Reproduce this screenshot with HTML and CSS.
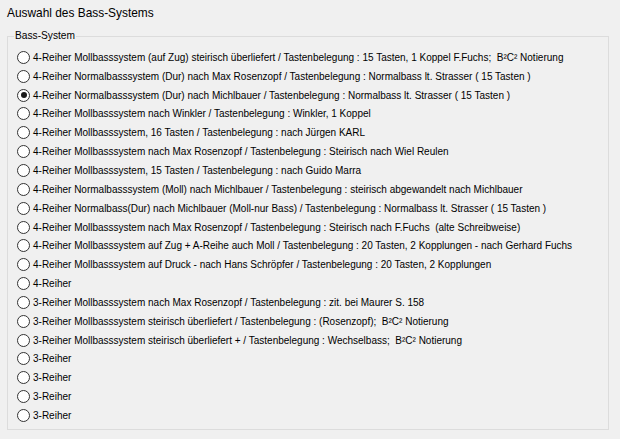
FILE: index.html
```html
<!DOCTYPE html>
<html>
<head>
<meta charset="utf-8">
<link rel="stylesheet" href="styles.css">
</head>
<body>
<div class="title">Auswahl des Bass-Systems</div>
<fieldset class="group">
<legend class="legend">Bass-System</legend>
<div class="list">
<div class="opt"><span class="radio"></span><span class="lbl">4-Reiher Mollbasssystem (auf Zug) steirisch überliefert / Tastenbelegung : 15 Tasten, 1 Koppel F.Fuchs;&nbsp; B²C² Notierung</span></div>
<div class="opt"><span class="radio"></span><span class="lbl">4-Reiher Normalbasssystem (Dur) nach Max Rosenzopf / Tastenbelegung : Normalbass lt. Strasser ( 15 Tasten )</span></div>
<div class="opt"><span class="radio checked"></span><span class="lbl">4-Reiher Normalbasssystem (Dur) nach Michlbauer / Tastenbelegung : Normalbass lt. Strasser ( 15 Tasten )</span></div>
<div class="opt"><span class="radio"></span><span class="lbl">4-Reiher Mollbasssystem nach Winkler / Tastenbelegung : Winkler, 1 Koppel</span></div>
<div class="opt"><span class="radio"></span><span class="lbl">4-Reiher Mollbasssystem, 16 Tasten / Tastenbelegung : nach Jürgen KARL</span></div>
<div class="opt"><span class="radio"></span><span class="lbl">4-Reiher Mollbasssystem nach Max Rosenzopf / Tastenbelegung : Steirisch nach Wiel Reulen</span></div>
<div class="opt"><span class="radio"></span><span class="lbl">4-Reiher Mollbasssystem, 15 Tasten / Tastenbelegung : nach Guido Marra</span></div>
<div class="opt"><span class="radio"></span><span class="lbl">4-Reiher Normalbasssystem (Moll) nach Michlbauer / Tastenbelegung : steirisch abgewandelt nach Michlbauer</span></div>
<div class="opt"><span class="radio"></span><span class="lbl">4-Reiher Normalbass(Dur) nach Michlbauer (Moll-nur Bass) / Tastenbelegung : Normalbass lt. Strasser ( 15 Tasten )</span></div>
<div class="opt"><span class="radio"></span><span class="lbl">4-Reiher Mollbasssystem nach Max Rosenzopf / Tastenbelegung : Steirisch nach F.Fuchs&nbsp; (alte Schreibweise)</span></div>
<div class="opt"><span class="radio"></span><span class="lbl">4-Reiher Mollbasssystem auf Zug + A-Reihe auch Moll / Tastenbelegung : 20 Tasten, 2 Kopplungen - nach Gerhard Fuchs</span></div>
<div class="opt"><span class="radio"></span><span class="lbl">4-Reiher Mollbasssystem auf Druck - nach Hans Schröpfer / Tastenbelegung : 20 Tasten, 2 Kopplungen</span></div>
<div class="opt"><span class="radio"></span><span class="lbl">4-Reiher</span></div>
<div class="opt"><span class="radio"></span><span class="lbl">3-Reiher Mollbasssystem nach Max Rosenzopf / Tastenbelegung : zit. bei Maurer S. 158</span></div>
<div class="opt"><span class="radio"></span><span class="lbl">3-Reiher Mollbasssystem steirisch überliefert / Tastenbelegung : (Rosenzopf);&nbsp; B²C² Notierung</span></div>
<div class="opt"><span class="radio"></span><span class="lbl">3-Reiher Mollbasssystem steirisch überliefert + / Tastenbelegung : Wechselbass;&nbsp; B²C² Notierung</span></div>
<div class="opt"><span class="radio"></span><span class="lbl">3-Reiher</span></div>
<div class="opt"><span class="radio"></span><span class="lbl">3-Reiher</span></div>
<div class="opt"><span class="radio"></span><span class="lbl">3-Reiher</span></div>
<div class="opt"><span class="radio"></span><span class="lbl">3-Reiher</span></div>
</div>
</fieldset>
</body>
</html>
```
FILE: styles.css
```css
html, body {
  margin: 0;
  padding: 0;
  background: #f0f0f0;
}
body {
  font-family: "Liberation Sans", Arial, sans-serif;
  font-size: 10px;
  color: #000;
  width: 620px;
  height: 439px;
  overflow: hidden;
}
.title {
  padding: 6px 0 0 7px;
  height: 16px;
  line-height: 14px;
  font-size: 11.9px;
}
.group {
  margin: 8px 0 0 7px;
  width: 602px;
  height: 400px;
  box-sizing: border-box;
  border: 1px solid #dcdcdc;
  padding: 10px 0 0 9px;
  min-width: 0;
}
.legend {
  padding: 0 1px;
  margin-left: -3px;
  line-height: 12px;
  font-size: 10.2px;
}
.list {
  display: flex;
  flex-direction: column;
  margin-top: -4px;
}
.opt {
  display: flex;
  align-items: center;
  height: 18.85px;
  white-space: nowrap;
}
.radio {
  width: 13px;
  height: 13px;
  box-sizing: border-box;
  border: 1px solid #333;
  border-radius: 50%;
  background: #fff;
  margin-right: 3px;
  flex: none;
  display: flex;
  align-items: center;
  justify-content: center;
}
.radio.checked::after {
  content: "";
  width: 6px;
  height: 6px;
  border-radius: 50%;
  background: #1a1a1a;
}
.lbl {
  line-height: 13px;
}
```
